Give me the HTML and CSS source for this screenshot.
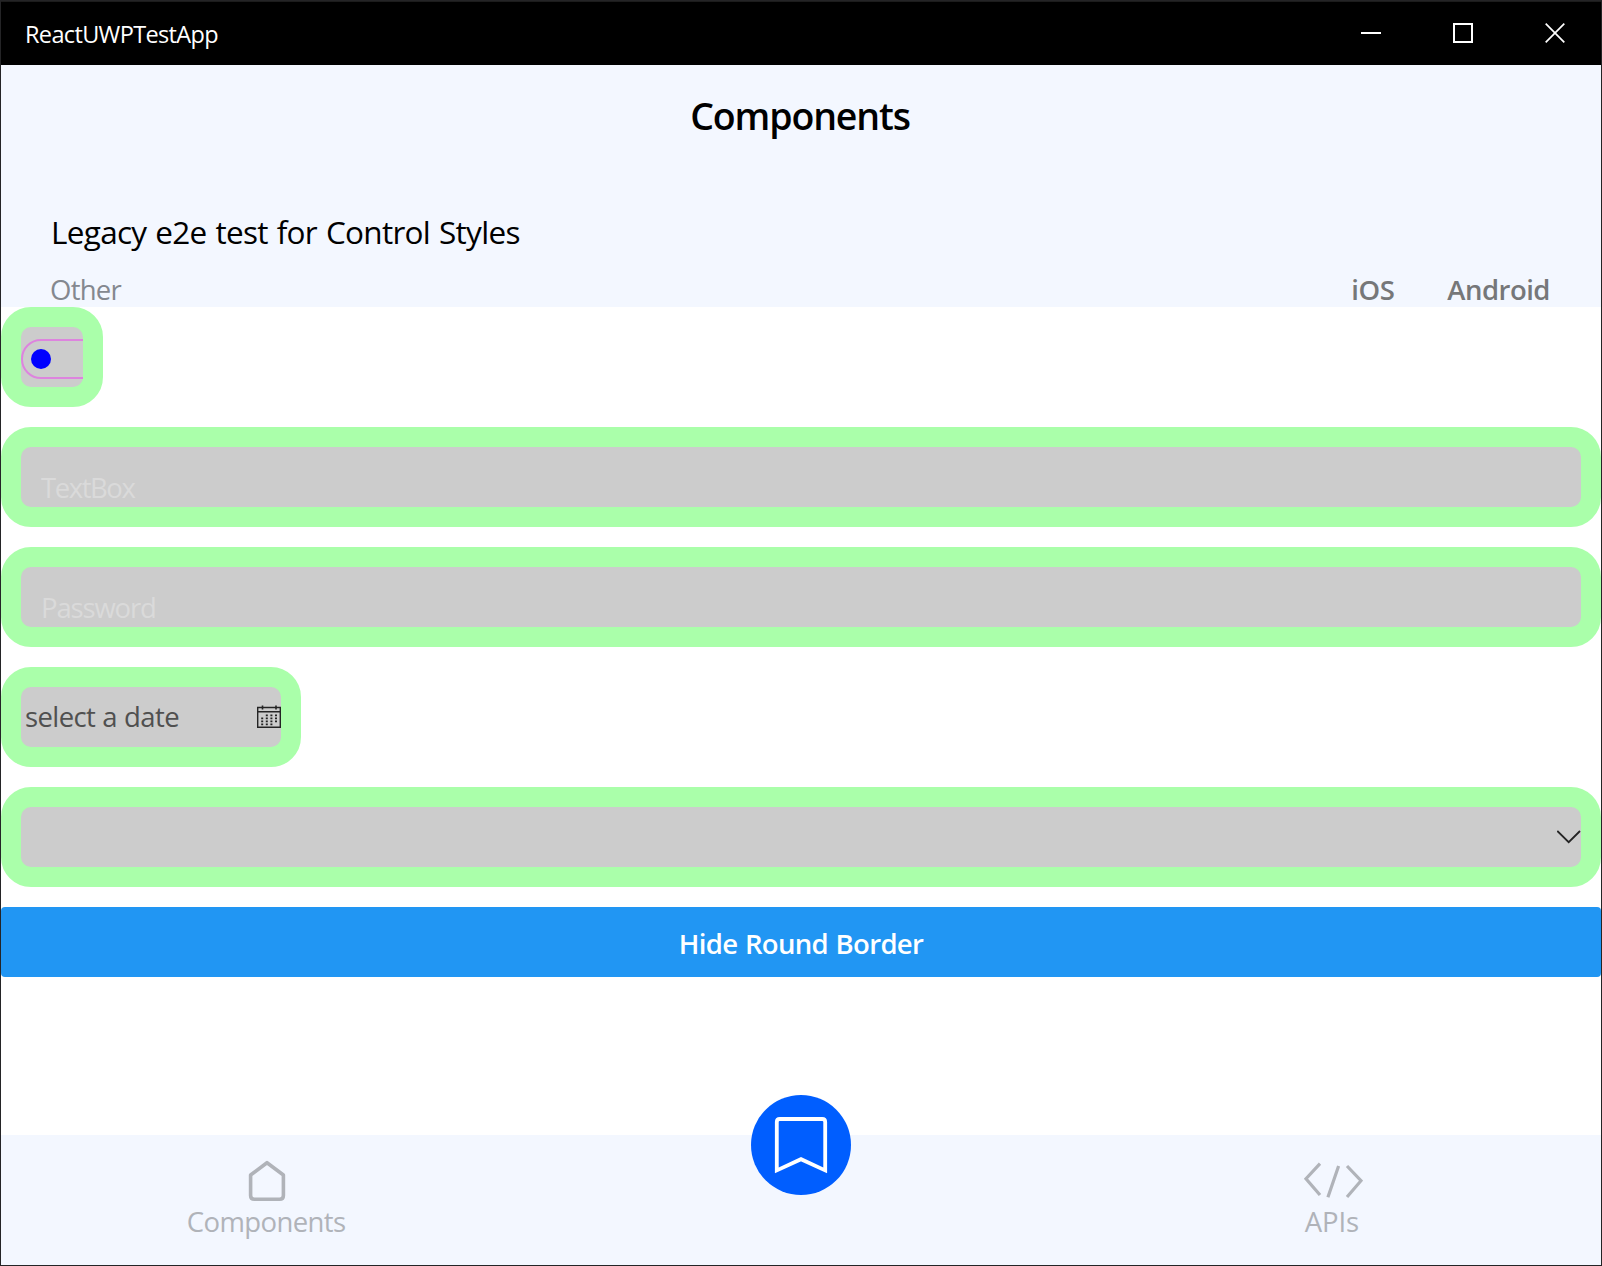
FILE: index.html
```html
<!DOCTYPE html>
<html lang="en">
<head>
<meta charset="utf-8">
<title>ReactUWPTestApp</title>
<link rel="stylesheet" href="styles.css">
</head>
<body>
<div class="window">
  <header class="titlebar">
    <span class="app-name">ReactUWPTestApp</span>
    <div class="controls">
      <svg class="control" viewBox="0 0 92 64"><path d="M36 32H56" stroke="#fff" stroke-width="2"/></svg>
      <svg class="control" viewBox="0 0 92 64"><rect x="37" y="23" width="18" height="18" fill="none" stroke="#fff" stroke-width="2"/></svg>
      <svg class="control" viewBox="0 0 92 64"><path d="M36.7 22.7L55.3 41.3M55.3 22.7L36.7 41.3" stroke="#fff" stroke-width="1.7"/></svg>
    </div>
  </header>
  <section class="heading">
    <h1 class="title">Components</h1>
    <h2 class="example">Legacy e2e test for Control Styles</h2>
    <div class="meta">
      <span class="category">Other</span>
      <span class="ios">iOS</span>
      <span class="android">Android</span>
    </div>
  </section>
  <main class="content">
    <div class="field switch">
      <svg class="toggle" viewBox="0 0 62 60"><rect x="1" y="13" width="78" height="38" rx="19" fill="none" stroke="#dd84de" stroke-width="2"/><circle cx="20" cy="32" r="10" fill="#00f"/></svg>
    </div>
    <div class="field input"><span class="textbox">TextBox</span></div>
    <div class="field input"><span class="password">Password</span></div>
    <div class="field date">
      <span class="date-text">select a date</span>
      <svg class="calendar" viewBox="0 0 24 24"><g fill="none" stroke="#242424"><path d="M.7 2.5H23.3V22.3H.7ZM.7 6.8H23.3" stroke-width="1.4"/><path d="M5.5 .5V4.5M19 .5V4.5" stroke-width="1.6"/><path d="M8.8 10.3H21M4.2 13.3H21M4.2 16.3H21M4.2 19.3H16" stroke-width="1.7" stroke-dasharray="2 2.6"/></g></svg>
    </div>
    <div class="field picker">
      <svg class="chevron" viewBox="0 0 24 14"><path d="M.3 1L11.7 12.2L23 1" fill="none" stroke="#242424" stroke-width="1.8"/></svg>
    </div>
    <button class="hide"><span class="hide-text">Hide Round Border</span></button>
  </main>
  <nav class="tabs">
    <div class="tab components-tab">
      <svg class="tab-icon" viewBox="0 0 60 44"><path d="M13.6 16L30 3.7L46.4 16V36.5Q46.4 40.3 42.6 40.3H17.4Q13.6 40.3 13.6 36.5Z" fill="none" stroke="#b0b3b9" stroke-width="3.6" stroke-linejoin="round"/></svg>
      <span class="components-label">Components</span>
    </div>
    <div class="tab">
      <svg class="bookmark" viewBox="0 0 100 100"><circle cx="50" cy="50" r="50" fill="#005eff"/><path d="M25.8 75.4V27Q25.8 24 28.8 24H71.2Q74.2 24 74.2 27V75.4L50 64.2Z" fill="none" stroke="#fff" stroke-width="3.8"/></svg>
    </div>
    <div class="tab apis-tab">
      <svg class="tab-icon" viewBox="0 0 60 44"><path d="M17 4.7L3 19.7L17 36M35.6 7L24.9 38.3M44 7L58 21.7L44 38" fill="none" stroke="#b0b3b9" stroke-width="3.2"/></svg>
      <span class="apis-label">APIs</span>
    </div>
  </nav>
</div>
</body>
</html>
```
FILE: styles.css
```css
* { box-sizing: border-box; }
body {
  margin: 0;
  font-family: "Open Sans", "Noto Sans", sans-serif;
  font-size: 27.5px;
  line-height: 38px;
  white-space: nowrap;
}
svg { display: block; }
.window {
  width: 1602px;
  height: 1266px;
  border: 1px solid #242426;
  background: #fff;
  display: flex;
  flex-direction: column;
}
.titlebar {
  height: 64px;
  flex: none;
  display: flex;
  justify-content: space-between;
  background: #000;
  border-top: 1px solid #1c1c1c;
  color: #fff;
}
.app-name {
  padding: 13px 0 0 24px;
  font-size: 23.5px;
  line-height: 38px;
  letter-spacing: -0.65px;
}
.controls { display: flex; margin-top: -1px; }
.control { width: 92px; height: 64px; }
.heading {
  height: 242px;
  flex: none;
  background: #f3f7ff;
}
.title {
  margin: 0;
  padding: 23px 2px 0 0;
  font-size: 37.5px;
  line-height: 56px;
  font-weight: 600;
  text-align: center;
  letter-spacing: -1.15px;
}
.example {
  margin: 0;
  padding: 64px 0 0 50px;
  font-size: 31.5px;
  line-height: 48px;
  font-weight: 400;
  letter-spacing: -0.7px;
  word-spacing: 1.4px;
}
.meta {
  display: flex;
  padding: 15px 51px 0 49px;
  color: #84888f;
}
.category { letter-spacing: -0.75px; }
.ios, .android { font-weight: 600; color: #767779; letter-spacing: -0.5px; }
.ios { margin-left: auto; }
.android { margin-left: 53px; }
.content {
  flex: 1;
  display: flex;
  flex-direction: column;
  align-items: flex-start;
  gap: 20px;
}
.field {
  width: 100%;
  height: 100px;
  border-radius: 30px;
  border: 20px solid #aaffaa;
  background: #ccc;
  display: flex;
}
.switch { width: 102px; }
.toggle { width: 62px; height: 60px; }
.input { padding: 22px 0 0 20px; color: #dadada; }
.textbox { letter-spacing: -1.45px; }
.password { letter-spacing: -1.15px; }
.date {
  width: 300px;
  justify-content: space-between;
  padding-top: 11px;
  color: #505050;
}
.date-text { padding-left: 4px; letter-spacing: -0.6px; word-spacing: 0.5px; }
.calendar { width: 24px; height: 24px; margin-top: 7px; }
.picker { justify-content: flex-end; }
.chevron { width: 24px; height: 14px; margin-top: 23px; }
.hide {
  width: 100%;
  height: 70px;
  padding: 4px 0 0;
  border: 0;
  border-radius: 4px;
  background: #2196f3;
  color: #fff;
  font: inherit;
  font-weight: 600;
  letter-spacing: -0.65px;
  word-spacing: 1px;
}
.tabs {
  height: 130px;
  flex: none;
  display: flex;
  background: #f3f7ff;
  color: #b0b3b9;
}
.tab {
  flex: 0 0 calc(100% / 3);
  display: flex;
  flex-direction: column;
  align-items: center;
  padding-top: 24px;
}
.components-tab { padding-right: 1px; }
.apis-tab { padding-right: 3px; }
.tab-icon { width: 60px; height: 44px; }
.components-label { padding-right: 2px; letter-spacing: -0.6px; }
.apis-label { padding-right: 2px; letter-spacing: -0.1px; }
.bookmark { width: 100px; height: 100px; margin-top: -64px; }
```
